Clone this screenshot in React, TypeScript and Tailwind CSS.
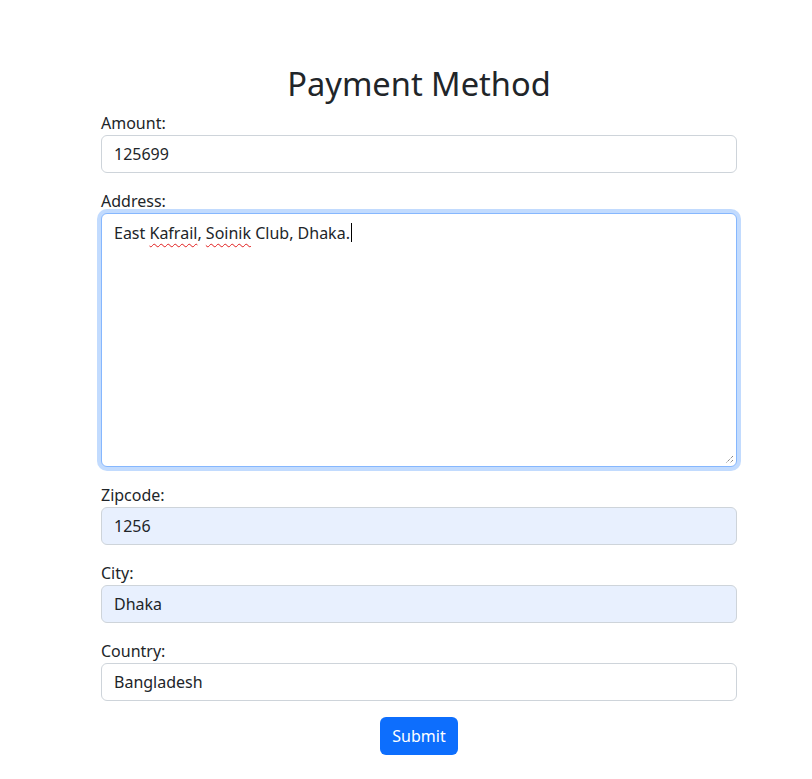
export default function App() {
  const font = { fontFamily: '"Noto Sans", sans-serif' };

  const fields = [
    { label: "Zipcode:", value: "1256", filled: true },
    { label: "City:", value: "Dhaka", filled: true },
    { label: "Country:", value: "Bangladesh", filled: false },
  ];

  return (
    <div className="min-h-[779px] bg-white text-[#212529]" style={font}>
      <form className="ml-[101px] w-[636px] pt-[65px]">
        <h1 className="mb-2 text-center text-[32.6px] leading-[38px] font-normal">Payment Method</h1>

        <div className="mb-4">
          <label className="block text-base leading-6">Amount:</label>
          <input
            readOnly
            value="125699"
            className="block h-[38px] w-full rounded-md border border-[#ced4da] bg-white px-3 text-base leading-6 text-[#212529] outline-none"
          />
        </div>

        <div className="mb-4">
          <label className="block text-base leading-6">Address:</label>
          <div className="relative h-[254px] w-full rounded-md border border-[#86b7fe] bg-white px-3 py-1.5 text-base leading-6 shadow-[0_0_0_4px_rgba(13,110,253,0.25)]">
            <span>East </span>
            <span className="underline decoration-wavy decoration-[#e11d1d] decoration-1 underline-offset-[4px]">Kafrail</span>
            <span>, </span>
            <span className="underline decoration-wavy decoration-[#e11d1d] decoration-1 underline-offset-[4px]">Soinik</span>
            <span> Club, Dhaka.</span>
            <span className="ml-px inline-block h-[19px] w-px translate-y-[3px] bg-black align-baseline" />
            <svg className="absolute bottom-0.5 right-0.5" width="9" height="9" viewBox="0 0 9 9">
              <path d="M8 1 L1 8 M8 5 L5 8" stroke="#555" strokeWidth="1" strokeDasharray="1 1" />
            </svg>
          </div>
        </div>

        {fields.map((f, i) => (
          <div className="mb-4" key={i}>
            <label className="block text-base leading-6">{f.label}</label>
            <input
              readOnly
              value={f.value}
              className={`block h-[38px] w-full rounded-md border border-[#ced4da] px-3 text-base leading-6 text-[#212529] outline-none ${
                f.filled ? "bg-[#e8f0fe]" : "bg-white"
              }`}
            />
          </div>
        ))}

        <div className="flex justify-center">
          <button
            type="button"
            className="h-[38px] rounded-md bg-[#0d6efd] px-3 text-base leading-6 text-white"
          >
            Submit
          </button>
        </div>
      </form>
    </div>
  );
}
